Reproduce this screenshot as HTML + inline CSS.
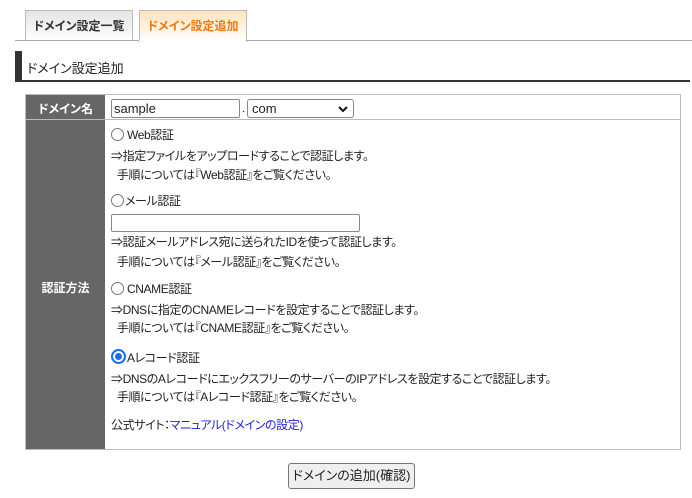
<!DOCTYPE html>
<html><head><meta charset="utf-8"><style>
*{margin:0;padding:0;box-sizing:border-box}
body{width:692px;height:498px;background:#fff;font-family:"Liberation Sans","Noto Sans CJK JP",sans-serif;font-size:12px;color:#222;position:relative;overflow:hidden;font-feature-settings:"palt"}
.abs{position:absolute;white-space:nowrap}
.tab{position:absolute;top:10px;height:31px;border:1px solid #bbb;border-bottom:none;font-weight:bold;font-size:12px;line-height:30px;text-align:center}
.t{position:absolute;left:111px;white-space:nowrap;line-height:14px;letter-spacing:-0.4px}
.radio{display:inline-block;width:13px;height:13px;border:1px solid #777;border-radius:50%;vertical-align:-2px;margin-right:3px;background:#fff}
</style></head><body>
<div class="tab" style="left:25px;width:108px;background:linear-gradient(#e4e4e4,#fff);color:#333">ドメイン設定一覧</div>
<div class="tab" style="left:139px;width:108px;background:linear-gradient(#ffe2bd,#fff);color:#f07a10;height:32px">ドメイン設定追加</div>
<div class="abs" style="left:15px;top:40px;width:677px;height:1px;background:#aaa"></div>
<div class="abs" style="left:139px;top:40px;width:107px;height:1px;background:#fff"></div>
<div class="abs" style="left:15px;top:51px;width:7px;height:30px;background:#333"></div>
<div class="abs" style="left:27px;top:58px;font-size:13px;color:#222">ドメイン設定追加</div>
<div class="abs" style="left:15px;top:80px;width:675px;height:2px;background:#333"></div>

<div class="abs" style="left:25px;top:94px;width:656px;height:356px;border:1px solid #bbb"></div>
<div class="abs" style="left:26px;top:95px;width:79px;height:354px;background:#666"></div>
<div class="abs" style="left:26px;top:119px;width:654px;height:1px;background:#bbb"></div>
<div class="abs" style="left:26px;top:100px;width:79px;text-align:center;color:#fff;font-weight:bold">ドメイン名</div>
<div class="abs" style="left:26px;top:279px;width:79px;text-align:center;color:#fff;font-weight:bold">認証方法</div>

<div class="abs" style="left:111px;top:99px;width:129px;height:19px;border:1px solid #888;border-radius:2px;padding-left:2px;font-size:13px;line-height:17px">sample</div>
<div class="abs" style="left:242px;top:101px">.</div>
<div class="abs" style="left:247px;top:99px;width:107px;height:19px;border:1px solid #888;border-radius:3px;padding-left:4px;font-size:13px;line-height:17px">com<svg style="position:absolute;right:5px;top:6px" width="10" height="7" viewBox="0 0 10 7"><path d="M1 1l4 4 4-4" fill="none" stroke="#111" stroke-width="2"/></svg></div>

<div class="t" style="top:128px"><span class="radio"></span>Web認証</div>
<div class="t" style="top:149px">⇒指定ファイルをアップロードすることで認証します。</div>
<div class="t" style="top:168px">&nbsp;&nbsp;手順については『Web認証』をご覧ください。</div>
<div class="t" style="top:194px"><span class="radio" style="margin-right:1px"></span>メール認証</div>
<div class="abs" style="left:111px;top:214px;width:249px;height:18px;border:1px solid #888;border-radius:2px"></div>
<div class="t" style="top:235px">⇒認証メールアドレス宛に送られたIDを使って認証します。</div>
<div class="t" style="top:255px">&nbsp;&nbsp;手順については『メール認証』をご覧ください。</div>
<div class="t" style="top:282px"><span class="radio"></span>CNAME認証</div>
<div class="t" style="top:303px">⇒DNSに指定のCNAMEレコードを設定することで認証します。</div>
<div class="t" style="top:321px">&nbsp;&nbsp;手順については『CNAME認証』をご覧ください。</div>
<div class="t" style="top:349px"><span class="radio" style="width:15px;height:15px;border:2px solid #1a6ee8;box-shadow:inset 0 0 0 2px #fff;background:#1a6ee8;margin-right:1px"></span>Aレコード認証</div>
<div class="t" style="top:372px">⇒DNSのAレコードにエックスフリーのサーバーのIPアドレスを設定することで認証します。</div>
<div class="t" style="top:390px">&nbsp;&nbsp;手順については『Aレコード認証』をご覧ください。</div>
<div class="t" style="top:418px">公式サイト：<span style="color:#2222dd">マニュアル(ドメインの設定)</span></div>

<div class="abs" style="left:288px;top:463px;width:127px;height:26px;border:1px solid #777;border-radius:3px;background:#efefef;text-align:center;line-height:24px;font-size:13px">ドメインの追加(確認)</div>
</body></html>
